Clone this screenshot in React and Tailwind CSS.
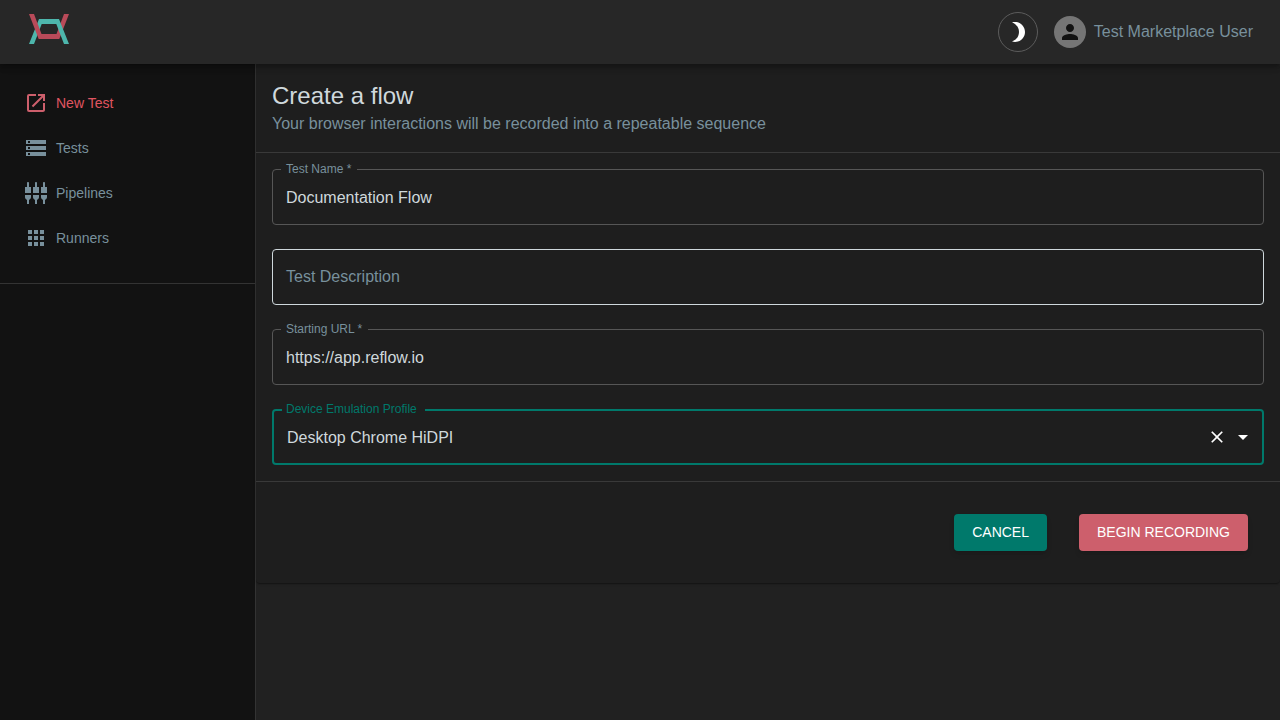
import React, { useState } from 'react';
import {
    MdApps,
    MdArrowDropDown,
    MdBrightness3,
    MdClose,
    MdOpenInNew,
    MdPerson,
    MdSettingsInputComponent,
    MdStorage
} from 'react-icons/md';

const navItems = [
    { path: '#new', label: 'New Test', icon: MdOpenInNew },
    { path: '#tests', label: 'Tests', icon: MdStorage },
    { path: '#pipelines', label: 'Pipelines', icon: MdSettingsInputComponent },
    { path: '#runners', label: 'Runners', icon: MdApps },
];

const devices = ['Desktop Chrome HiDPI', 'Desktop Firefox HiDPI', 'Desktop Safari'];

const Logo = () => (
    <svg width="40" height="30" viewBox="0 0 40 30" aria-hidden="true">
        <path fill="#b94a59" d="M27.5 20 35 0h5l-9.7 25H20v-5z" />
        <path fill="#4db6ac" d="M0 30 10 5h20l10 25h-5L27.3 10H12.7L5 30z" />
        <path fill="#b94a59" d="M0 0h5l7.5 20H28l-1 5H9.7z" />
    </svg>
);

const Header = () => (
    <header className="relative z-10 flex h-16 shrink-0 items-center justify-between bg-[#272727] pr-[27px] pl-[29px] shadow-[0_2px_4px_-1px_rgba(0,0,0,0.2),0_4px_5px_0_rgba(0,0,0,0.14),0_1px_10px_0_rgba(0,0,0,0.12)]">
        <a href="#home" aria-label="Home" className="pb-1.5">
            <Logo />
        </a>
        <div className="flex items-center gap-4">
            <button aria-label="Toggle theme" className="flex h-10 w-10 items-center justify-center rounded-full border border-[#5c5c5c] text-white">
                <MdBrightness3 size={24} />
            </button>
            <a href="#account" className="flex items-center gap-2 text-[#78909c]">
                <span className="flex h-8 w-8 items-center justify-center rounded-full bg-[#757575] text-[#121212]">
                    <MdPerson size={24} />
                </span>
                Test Marketplace User
            </a>
        </div>
    </header>
);

const Sidebar = () => (
    <aside className="w-64 shrink-0 border-r border-[#333333] bg-[#121212]">
        <nav className="border-b border-[#333333] pt-4 pb-[23px]">
            {navItems.map((item, index) => {
                const Icon = item.icon;

                return (
                    <a
                        key={item.path}
                        href={item.path}
                        className={`flex h-[45px] items-center gap-2 px-6 text-sm ${index === 0 ? 'text-[#e05561]' : 'text-[#78909c]'}`}
                    >
                        <Icon size={24} className={index === 0 ? 'text-[#cd5f6c]' : ''} />
                        {item.label}
                    </a>
                );
            })}
        </nav>
    </aside>
);

const TextField = ({ id, label, value, onChange, type = 'text', required, highlighted }) => (
    <div className={`relative h-14 rounded border ${highlighted ? 'border-[#cfd8dc]' : 'border-[#565656]'}`}>
        <input
            id={id}
            type={type}
            value={value}
            onChange={(e) => onChange(e.target.value)}
            required={required}
            className="h-full w-full bg-transparent px-[13px] pt-0.5 text-[#cfd8dc] outline-none"
        />
        <label
            htmlFor={id}
            className={value
                ? 'absolute -top-[9px] left-2 bg-[#1e1e1e] pr-1.5 pl-[5px] text-xs text-[#78909c]'
                : 'absolute top-[15px] left-[13px] text-[#78909c]'}
        >
            {label}{required && ' *'}
        </label>
    </div>
);

const DeviceSelect = ({ value, onChange }) => (
    <div className="relative flex h-14 items-center rounded border-2 border-[#00796b] pr-[7px]">
        <label
            htmlFor="device"
            className="absolute -top-[10px] left-2 bg-[#1e1e1e] pr-2 pl-1 text-xs text-[#00796b]"
        >
            Device Emulation Profile
        </label>
        <select
            id="device"
            value={value}
            onChange={(e) => onChange(e.target.value)}
            className="h-full min-w-0 flex-1 appearance-none bg-transparent pt-0.5 pl-[13px] text-[#cfd8dc] outline-none"
        >
            <option value="" />
            {devices.map((device) => (
                <option key={device} value={device} className="bg-[#1e1e1e]">{device}</option>
            ))}
        </select>
        <button type="button" aria-label="Clear" onClick={() => onChange('')} className="text-white">
            <MdClose size={20} />
        </button>
        <MdArrowDropDown size={24} className="pointer-events-none ml-1 text-white" />
    </div>
);

const App = () => {
    const [name, setName] = useState('Documentation Flow');
    const [description, setDescription] = useState('');
    const [url, setUrl] = useState('https://app.reflow.io');
    const [device, setDevice] = useState(devices[0]);

    return (
        <div className="flex min-h-screen flex-col bg-[#212121] font-['Liberation_Sans',Arial,sans-serif] text-base">
            <Header />
            <div className="flex flex-1">
                <Sidebar />
                <main className="min-w-0 flex-1">
                    <form
                        onSubmit={(e) => e.preventDefault()}
                        className="rounded bg-[#1e1e1e] shadow-[0_2px_1px_-1px_rgba(0,0,0,0.2),0_1px_1px_0_rgba(0,0,0,0.14),0_1px_3px_0_rgba(0,0,0,0.12)]"
                    >
                        <div className="p-4">
                            <h1 className="text-2xl text-[#cfd8dc]">Create a flow</h1>
                            <p className="text-[#78909c]">Your browser interactions will be recorded into a repeatable sequence</p>
                        </div>

                        {/* Fields */}
                        <div className="flex flex-col gap-6 border-y border-[#393939] p-4">
                            <TextField id="name" label="Test Name" value={name} onChange={setName} required />
                            <TextField id="description" label="Test Description" value={description} onChange={setDescription} highlighted />
                            <TextField id="url" label="Starting URL" type="url" value={url} onChange={setUrl} required />
                            <DeviceSelect value={device} onChange={setDevice} />
                        </div>

                        {/* Actions */}
                        <div className="flex justify-end gap-8 p-8">
                            <button type="button" className="h-[37px] rounded bg-[#00796b] px-[18px] pb-0.5 text-sm text-white uppercase shadow-md">
                                Cancel
                            </button>
                            <button type="submit" className="h-[37px] rounded bg-[#cd5f6c] px-[18px] pb-0.5 text-sm text-white uppercase shadow-md">
                                Begin Recording
                            </button>
                        </div>
                    </form>
                </main>
            </div>
        </div>
    );
};

export default App;
